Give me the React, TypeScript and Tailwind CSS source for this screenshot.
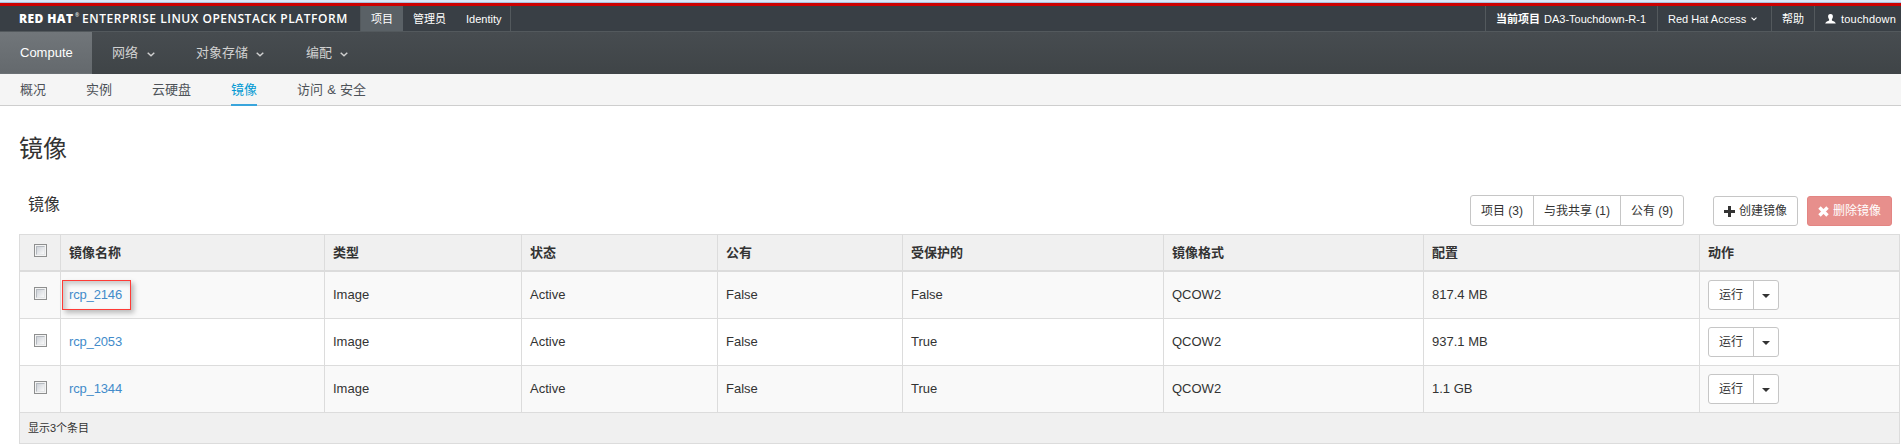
import type { ReactNode } from "react";

const columns = ["镜像名称", "类型", "状态", "公有", "受保护的", "镜像格式", "配置", "动作"];

const images = [
  { name: "rcp_2146", isPublic: "False", isProtected: "False", size: "817.4 MB", marked: true },
  { name: "rcp_2053", isPublic: "False", isProtected: "True", size: "937.1 MB", marked: false },
  { name: "rcp_1344", isPublic: "False", isProtected: "True", size: "1.1 GB", marked: false },
];

function Chevron({ className }: { className: string }) {
  return (
    <svg viewBox="0 0 8 5" fill="none" stroke="currentColor" strokeWidth="1.4" className={className}>
      <path d="M0.7 0.7 L4 3.8 L7.3 0.7" />
    </svg>
  );
}

function Checkbox() {
  return (
    <span className="block size-[13px] border border-[#8e8f8f] bg-[#f4f4f4] p-px">
      <span className="block size-[9px] border border-[#b5bac0] border-r-[#e4e6e8] border-b-[#e4e6e8] bg-linear-to-br from-[#cfd3d9] to-[#f9f9f9]" />
    </span>
  );
}

function TopCell({ children, className = "" }: { children: ReactNode; className?: string }) {
  return (
    <div className={"flex h-[25px] items-center whitespace-nowrap border-[#53595d] " + className}>{children}</div>
  );
}

function RowActions() {
  return (
    <div className="flex h-[30px] w-[71px] rounded-[3px] border border-[#c6c6c6] bg-white text-[12px]">
      <span className="flex w-[45px] items-center justify-center border-r border-[#c6c6c6]">运行</span>
      <span className="flex flex-1 items-center justify-center">
        <svg viewBox="0 0 8 4" className="mt-[2px] h-[4px] w-[8px]" fill="#333">
          <path d="M0 0H8L4 4Z" />
        </svg>
      </span>
    </div>
  );
}

export default function App() {
  return (
    <div className="h-[448px] w-[1901px] overflow-hidden bg-white font-['Liberation_Sans','Noto_Sans_CJK_SC',sans-serif] text-[13px] leading-[18px] text-[#333]">
      <div className="h-[2px] bg-[#dce8f7]" />
      <div className="h-px bg-[#a9bfdb]" />
      <div className="h-[3px] bg-[#c00]" />

      <header className="flex h-[26px] border-b border-[#53595d] bg-[#393f45] text-[11px] text-white">
        <div className="flex h-[25px] w-[360px] items-center pl-[19px] font-['Open_Sans','Liberation_Sans',sans-serif] whitespace-nowrap">
          <span className="w-[56px] text-[12px] font-extrabold tracking-[0.4px]">RED HAT</span>
          <span className="-mt-[7px] w-[7px] text-[5px]">®</span>
          <span className="text-[12px] font-semibold tracking-[0.53px]">ENTERPRISE LINUX OPENSTACK PLATFORM</span>
        </div>
        <TopCell className="w-[43px] border-l bg-[#5a6166] pl-[10px]">项目</TopCell>
        <TopCell className="w-[53px] pl-[10px]">管理员</TopCell>
        <TopCell className="w-[55px] border-r pl-[10px]">Identity</TopCell>
        <div className="flex-1" />
        <TopCell className="w-[172px] border-l pl-[10px]">
          <b className="mr-[4px]">当前项目</b>DA3-Touchdown-R-1
        </TopCell>
        <TopCell className="w-[114px] border-l pl-[10px]">
          Red Hat Access
          <Chevron className="ml-[5px] h-[4px] w-[6px]" />
        </TopCell>
        <TopCell className="w-[43px] border-l pl-[10px]">帮助</TopCell>
        <TopCell className="w-[87px] border-l pl-[10px]">
          <svg viewBox="0 0 11 10" className="mr-[5px] h-[10px] w-[11px]" fill="#fff">
            <path d="M5.5 0C7.4 0 8 1.200 7.900 2.700C7.800 4 7.300 4.700 6.900 5.200V6.400C8 7.200 10.600 7.500 10.800 9.500H0.200C0.400 7.500 3 7.200 4.100 6.400V5.200C3.700 4.700 3.200 4 3.100 2.700C3 1.200 3.600 0 5.500 0Z" />
          </svg>
          <span className="tracking-[0.2px]">touchdown</span>
        </TopCell>
      </header>

      <nav className="flex h-[42px] items-center bg-linear-to-b from-[#474c50] to-[#3f4447] text-[#d1d1d1]">
        <div className="flex h-[42px] w-[92px] items-center border-b border-[#6c7175] bg-linear-to-b from-[#71767a] to-[#64696d] pl-[20px] text-white">
          Compute
        </div>
        <div className="flex w-[84px] items-center pl-[20px]">
          网络
          <Chevron className="mt-[2px] ml-[9px] h-[5px] w-[8px]" />
        </div>
        <div className="flex w-[110px] items-center pl-[20px]">
          对象存储
          <Chevron className="mt-[2px] ml-[8px] h-[5px] w-[8px]" />
        </div>
        <div className="flex items-center pl-[20px]">
          编配
          <Chevron className="mt-[2px] ml-[8px] h-[5px] w-[8px]" />
        </div>
      </nav>

      <nav className="flex h-[32px] gap-[40px] border-b border-[#cecece] bg-[#f5f5f5] pl-[20px] leading-[31px] text-[#4d5258]">
        <span>概况</span>
        <span>实例</span>
        <span>云硬盘</span>
        <span className="h-[32px] border-b-2 border-[#39a5dc] text-[#0099d3]">镜像</span>
        <span className="[word-spacing:0.5px]">访问 &amp; 安全</span>
      </nav>

      <main className="pl-[19px]">
        <h1 className="mt-[27px] h-[32px] text-[24px] leading-[32px]">镜像</h1>
        <div className="mt-[30px] flex h-[39px] items-start justify-between pr-[9px]">
          <h2 className="pt-[1px] pl-[9px] text-[16px] leading-[18px]">镜像</h2>
          <div className="flex items-start text-[12px]">
            <div className="flex h-[31px] w-[214px] rounded-[3px] border border-[#c6c6c6] bg-white">
              <span className="flex w-[63px] items-center justify-center border-r border-[#c6c6c6]">项目 (3)</span>
              <span className="flex w-[87px] items-center justify-center border-r border-[#c6c6c6]">与我共享 (1)</span>
              <span className="flex flex-1 items-center justify-center">公有 (9)</span>
            </div>
            <div className="mt-px ml-[29px] flex h-[30px] w-[85px] items-center rounded-[3px] border border-[#c6c6c6] bg-white pl-[10px]">
              <svg viewBox="0 0 11 11" className="mr-[4px] size-[11px]" fill="#333">
                <path d="M4 0H7V4H11V7H7V11H4V7H0V4H4Z" />
              </svg>
              创建镜像
            </div>
            <div className="mt-px ml-[9px] flex h-[30px] w-[85px] items-center rounded-[3px] border border-[#e38583] bg-[#e78f8c] pl-[10px] text-white">
              <svg viewBox="0 0 11 11" className="mr-[4px] size-[11px]" fill="none" stroke="#fff" strokeWidth="3.4">
                <path d="M1.500 1.500L9.500 9.500M9.500 1.500L1.500 9.500" />
              </svg>
              删除镜像
            </div>
          </div>
        </div>

        <table className="w-[1881px] table-fixed border-separate border-spacing-0 border-t border-r border-[#dcdcdc]">
          <colgroup>
            <col className="w-[41px]" />
            <col className="w-[264px]" />
            <col className="w-[197px]" />
            <col className="w-[196px]" />
            <col className="w-[185px]" />
            <col className="w-[261px]" />
            <col className="w-[260px]" />
            <col className="w-[276px]" />
            <col className="w-[200px]" />
          </colgroup>
          <thead>
            <tr className="h-[37px] bg-[#f0f0f0] text-left">
              <th className="border-b-2 border-l border-[#dcdcdc] pb-[4px] pl-[14px] align-middle">
                <Checkbox />
              </th>
              {columns.map((label) => (
                <th key={label} className="border-b-2 border-l border-[#dcdcdc] p-0 pl-[8px] font-bold">
                  {label}
                </th>
              ))}
            </tr>
          </thead>
          <tbody>
            {images.map((image) => (
              <tr key={image.name} className="h-[47px] odd:bg-[#f9f9f9] [&>td]:border-b [&>td]:border-l [&>td]:border-[#dcdcdc] [&>td]:py-0 [&>td]:pr-0">
                <td className="pl-[14px]">
                  <div className="pb-[4px]">
                    <Checkbox />
                  </div>
                </td>
                <td className="pl-[1px] tracking-[-0.15px]">
                  {image.marked ? (
                    <span className="flex h-[30px] w-[69px] items-center border border-[#ff3b36] pl-[6px] text-[#428bca] shadow-[3px_3px_5px_rgba(0,0,0,0.25),inset_3px_3px_5px_rgba(0,0,0,0.2)]">
                      {image.name}
                    </span>
                  ) : (
                    <span className="pl-[7px] text-[#428bca]">{image.name}</span>
                  )}
                </td>
                <td className="pl-[8px]">Image</td>
                <td className="pl-[8px]">Active</td>
                <td className="pl-[8px]">{image.isPublic}</td>
                <td className="pl-[8px]">{image.isProtected}</td>
                <td className="pl-[8px]">QCOW2</td>
                <td className="pl-[8px]">{image.size}</td>
                <td className="pl-[8px]">
                  <RowActions />
                </td>
              </tr>
            ))}
          </tbody>
          <tfoot>
            <tr className="h-[31px] bg-[#f0f0f0]">
              <td colSpan={9} className="border-b border-l border-[#dcdcdc] p-0 pl-[8px] text-[11px]">
                显示3个条目
              </td>
            </tr>
          </tfoot>
        </table>
      </main>
    </div>
  );
}
